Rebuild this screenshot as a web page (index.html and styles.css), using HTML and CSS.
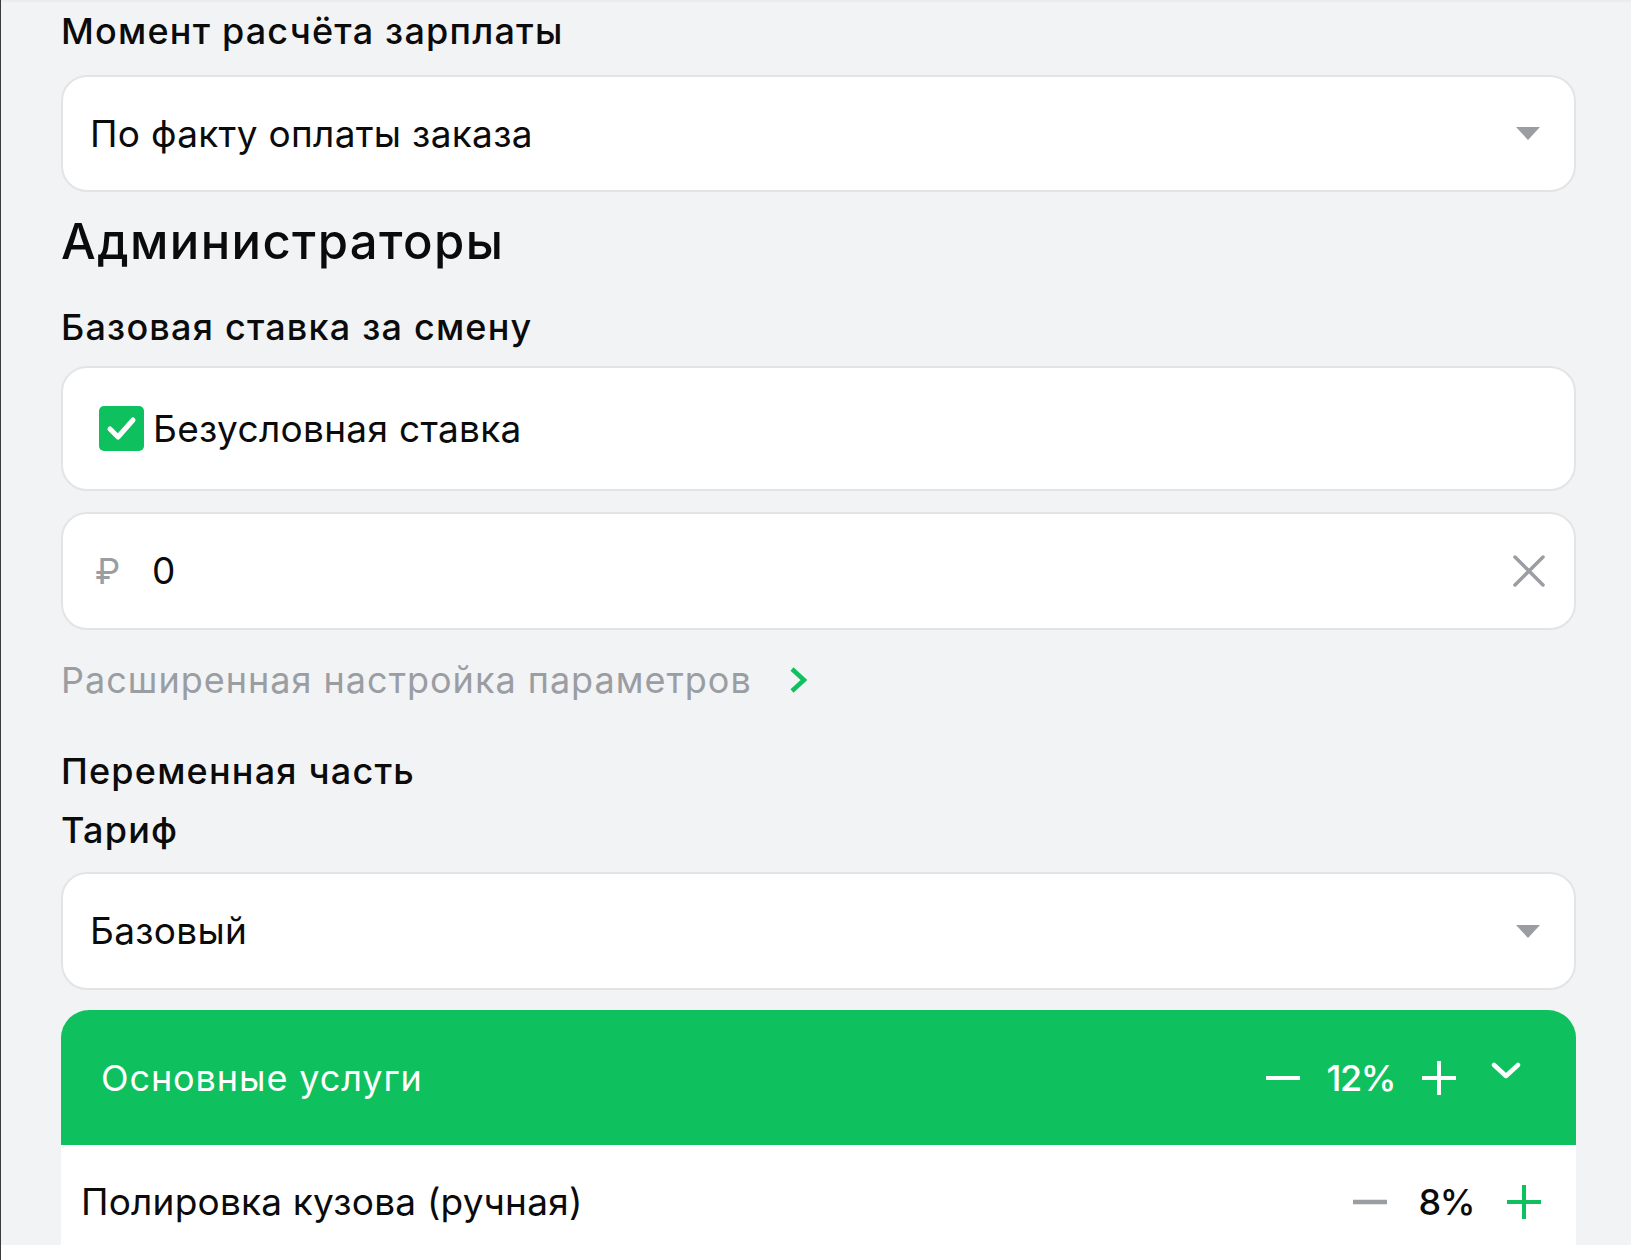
FILE: index.html
```html
<!DOCTYPE html>
<html lang="ru">
<head>
  <meta charset="UTF-8">
  <meta name="viewport" content="width=device-width, initial-scale=1.0">
  <title>Настройка зарплаты</title>
  <link rel="stylesheet" href="styles.css">
</head>
<body>
  <div class="page">
    <div class="content">
      <div class="field-label label-first">Момент расчёта зарплаты</div>
      <div class="field select">
        <span class="field-text">По факту оплаты заказа</span>
        <span class="select-arrow"></span>
      </div>

      <h2 class="section-title">Администраторы</h2>

      <div class="field-label label-base">Базовая ставка за смену</div>
      <div class="field checkbox-field">
        <span class="checkbox">
          <svg viewBox="0 0 45 45" width="45" height="45">
            <path d="M11 23 L19 31 L34 14" fill="none" stroke="#fff" stroke-width="5" stroke-linecap="round" stroke-linejoin="round"/>
          </svg>
        </span>
        <span class="field-text">Безусловная ставка</span>
      </div>

      <div class="field amount-field">
        <span class="currency">₽</span>
        <span class="field-text">0</span>
        <svg class="clear-icon" viewBox="0 0 32 32" width="32" height="32">
          <path d="M2 2 L30 30 M30 2 L2 30" stroke="#9a9da2" stroke-width="3.5" stroke-linecap="round"/>
        </svg>
      </div>

      <div class="advanced-link">
        <span>Расширенная настройка параметров</span>
        <svg viewBox="0 0 20 28" width="20" height="28">
          <path d="M4 3 L16 14 L4 25" fill="none" stroke="#0fc15e" stroke-width="4.5" stroke-linejoin="miter"/>
        </svg>
      </div>

      <div class="field-label label-variable">Переменная часть</div>
      <div class="field-label label-tariff">Тариф</div>
      <div class="field select">
        <span class="field-text">Базовый</span>
        <span class="select-arrow"></span>
      </div>

      <div class="group">
        <div class="group-header">
          <span class="group-title">Основные услуги</span>
          <div class="stepper">
            <svg class="step-icon" viewBox="0 0 34 34" width="34" height="34">
              <path d="M0 17 H34" stroke="#fff" stroke-width="4"/>
            </svg>
            <span class="step-value">12%</span>
            <svg class="step-icon" viewBox="0 0 34 34" width="34" height="34">
              <path d="M0 17 H34 M17 0 V34" stroke="#fff" stroke-width="4"/>
            </svg>
            <svg class="group-chevron" viewBox="0 0 30 18" width="30" height="18">
              <path d="M3 3 L15 14 L27 3" fill="none" stroke="#fff" stroke-width="4.5" stroke-linecap="round" stroke-linejoin="round"/>
            </svg>
          </div>
        </div>
        <div class="group-row">
          <span class="row-title">Полировка кузова (ручная)</span>
          <div class="stepper stepper-row">
            <svg class="step-icon" viewBox="0 0 34 34" width="34" height="34">
              <path d="M0 17 H34" stroke="#9a9da2" stroke-width="4.5"/>
            </svg>
            <span class="step-value">8%</span>
            <svg class="step-icon" viewBox="0 0 34 34" width="34" height="34">
              <path d="M0 17 H34 M17 0 V34" stroke="#0fc15e" stroke-width="4"/>
            </svg>
          </div>
        </div>
      </div>
    </div>
  </div>
</body>
</html>
```

FILE: styles.css
```css
:root {
  --page-bg: #f2f3f5;
  --green: #0fc15e;
  --text-color: #0b0b0b;
  --muted: #9a9da2;
  --border-color: #e3e4e6;
}

body {
  margin: 0;
  padding: 0;
  background-color: white;
  font-family: Inter, "Noto Sans", sans-serif;
  color: var(--text-color);
}

.page {
  border-left: 1px solid #3a3a3a;
  min-height: 100vh;
  box-sizing: border-box;
}

.content {
  background-color: var(--page-bg);
  padding: 9px 55px 0 60px;
  border-top: 2px solid #ebecee;
}

.field-label {
  font-size: 36px;
  font-weight: 500;
  line-height: 44px;
  letter-spacing: 1.2px;
}

.label-first {
  margin-top: -2px;
}

.label-base {
  margin-top: 33px;
}

.label-variable {
  margin-top: 47px;
}

.label-tariff {
  margin-top: 15px;
}

.section-title {
  font-size: 49px;
  font-weight: 500;
  line-height: 60px;
  margin: 20px 0 0;
  letter-spacing: 1.4px;
}

.field {
  display: flex;
  align-items: center;
  height: 117px;
  box-sizing: border-box;
  background-color: white;
  border: 2px solid var(--border-color);
  border-radius: 26px;
  margin-top: 22px;
}

.field-text {
  font-size: 37px;
  line-height: 44px;
  letter-spacing: 0.3px;
}

.select {
  padding: 0 34px 0 27px;
  justify-content: space-between;
}

.select-arrow {
  width: 0;
  height: 0;
  border-left: 12.5px solid transparent;
  border-right: 12.5px solid transparent;
  border-top: 13px solid var(--muted);
}

.checkbox-field {
  height: 125px;
  margin-top: 17px;
  padding-left: 36px;
  gap: 9px;
}

.checkbox {
  display: flex;
  width: 45px;
  height: 45px;
  border-radius: 5px;
  background-color: var(--green);
}

.amount-field {
  height: 118px;
  margin-top: 21px;
  padding: 0 29px 0 32px;
}

.currency {
  font-size: 36px;
  color: var(--muted);
  width: 57px;
}

.amount-field .field-text {
  flex: 1;
}

.advanced-link {
  display: flex;
  align-items: center;
  gap: 36px;
  margin-top: 28px;
  line-height: 44px;
  font-size: 36px;
  letter-spacing: 1px;
  color: var(--muted);
}

.label-tariff + .field {
  height: 118px;
  margin-top: 20px;
}

.group {
  margin-top: 20px;
}

.group-header {
  display: flex;
  align-items: center;
  justify-content: space-between;
  height: 135px;
  padding: 0 55px 0 40px;
  background-color: var(--green);
  border-radius: 28px 28px 0 0;
  color: white;
}

.group-title {
  font-size: 36px;
  line-height: 44px;
  letter-spacing: 0.9px;
}

.stepper {
  display: flex;
  align-items: center;
}

.step-value {
  font-size: 36px;
  font-weight: 500;
  letter-spacing: -1.5px;
  margin: 0 27px 0 27px;
}

.group-chevron {
  margin-left: 35px;
  margin-top: -13px;
}

.group-row {
  display: flex;
  align-items: center;
  justify-content: space-between;
  height: 100px;
  box-sizing: border-box;
  padding: 14px 35px 0 20px;
  background-color: white;
}

.row-title {
  font-size: 37px;
  line-height: 44px;
  letter-spacing: 0.2px;
}

.stepper-row .step-value {
  margin: 0 33px 0 32px;
}
```
